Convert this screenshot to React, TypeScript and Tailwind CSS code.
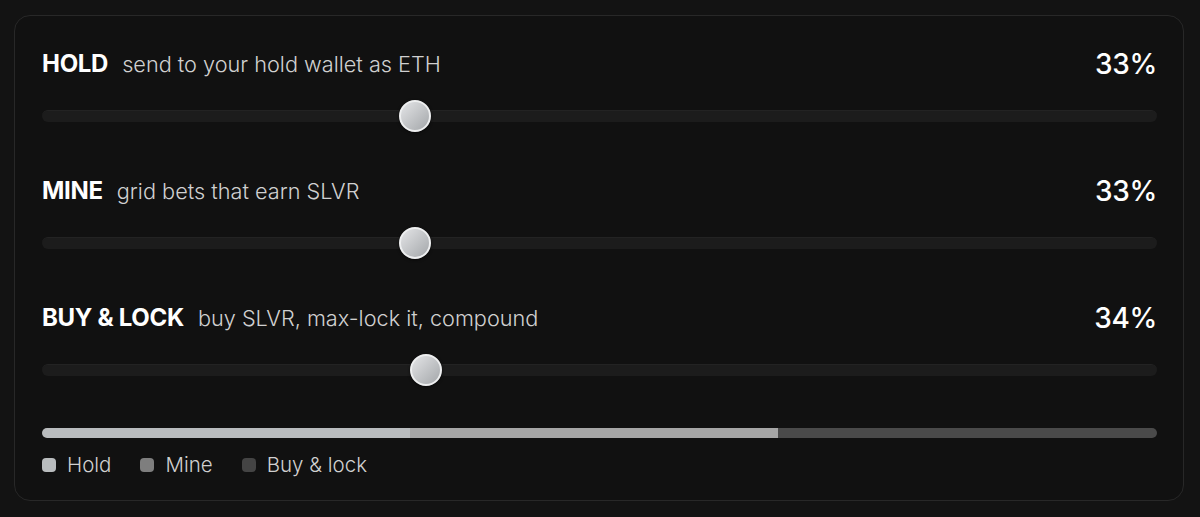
import React from "react";

type Alloc = { label: string; hint: string; pct: number };

const rows: Alloc[] = [
  { label: "HOLD", hint: "send to your hold wallet as ETH", pct: 33 },
  { label: "MINE", hint: "grid bets that earn SLVR", pct: 33 },
  { label: "BUY & LOCK", hint: "buy SLVR, max-lock it, compound", pct: 34 },
];

function Slider({ pct }: { pct: number }) {
  return (
    <div className="relative h-8 flex items-center">
      <div className="h-[12px] w-full rounded-full bg-[#1c1c1c] border-t border-[#232323]" />
      <div
        className="absolute top-0 h-8 w-8 rounded-full border-2 border-[#eeeff0] bg-gradient-to-br from-[#e4e5e7] to-[#a4a7aa] shadow-[0_1px_3px_rgba(0,0,0,0.6)]"
        style={{ left: `calc((100% - 32px) * ${pct / 100})` }}
      />
    </div>
  );
}

export default function App() {
  return (
    <div className="min-h-[517px] w-full bg-[#131313] pt-[15px] pl-[14px] font-['Inter',sans-serif]">
      <div className="w-[1170px] h-[486px] rounded-[16px] border border-[#282828] bg-[#111111] pl-[27px] pr-[26px] pt-[32px]">
        <div className="flex flex-col gap-[43px]">
          {rows.map((r) => (
            <div key={r.label} className="flex flex-col gap-[20px]">
              <div className="flex h-8 items-center justify-between">
                <div className="flex items-baseline gap-[14px]">
                  <span className="text-[24px] font-bold text-white tracking-[-0.3px]">{r.label}</span>
                  <span className="text-[21.7px] font-light text-[#d0d0d0]">{r.hint}</span>
                </div>
                <span className="text-[28px] font-medium text-white tracking-[-0.3px]">{r.pct}%</span>
              </div>
              <Slider pct={r.pct} />
            </div>
          ))}
        </div>
        <div className="mt-[42px] flex h-[10px] w-full overflow-hidden rounded-full">
          <div className="h-full bg-[#b9bcbe]" style={{ width: "33%" }} />
          <div className="h-full bg-[#a6a6a6]" style={{ width: "33%" }} />
          <div className="h-full bg-[#4a4a4a]" style={{ width: "34%" }} />
        </div>
        <div className="mt-[12px] flex items-center gap-[29px] text-[20.5px] font-light text-[#d0d0d0]">
          <div className="flex items-center gap-[11px]">
            <span className="h-[14px] w-[14px] rounded-[4px] bg-[#b9bcbe]" />
            <span>Hold</span>
          </div>
          <div className="flex items-center gap-[11px]">
            <span className="h-[14px] w-[14px] rounded-[4px] bg-[#7e7e7e]" />
            <span>Mine</span>
          </div>
          <div className="flex items-center gap-[11px]">
            <span className="h-[14px] w-[14px] rounded-[4px] bg-[#444444]" />
            <span>Buy &amp; lock</span>
          </div>
        </div>
      </div>
    </div>
  );
}
